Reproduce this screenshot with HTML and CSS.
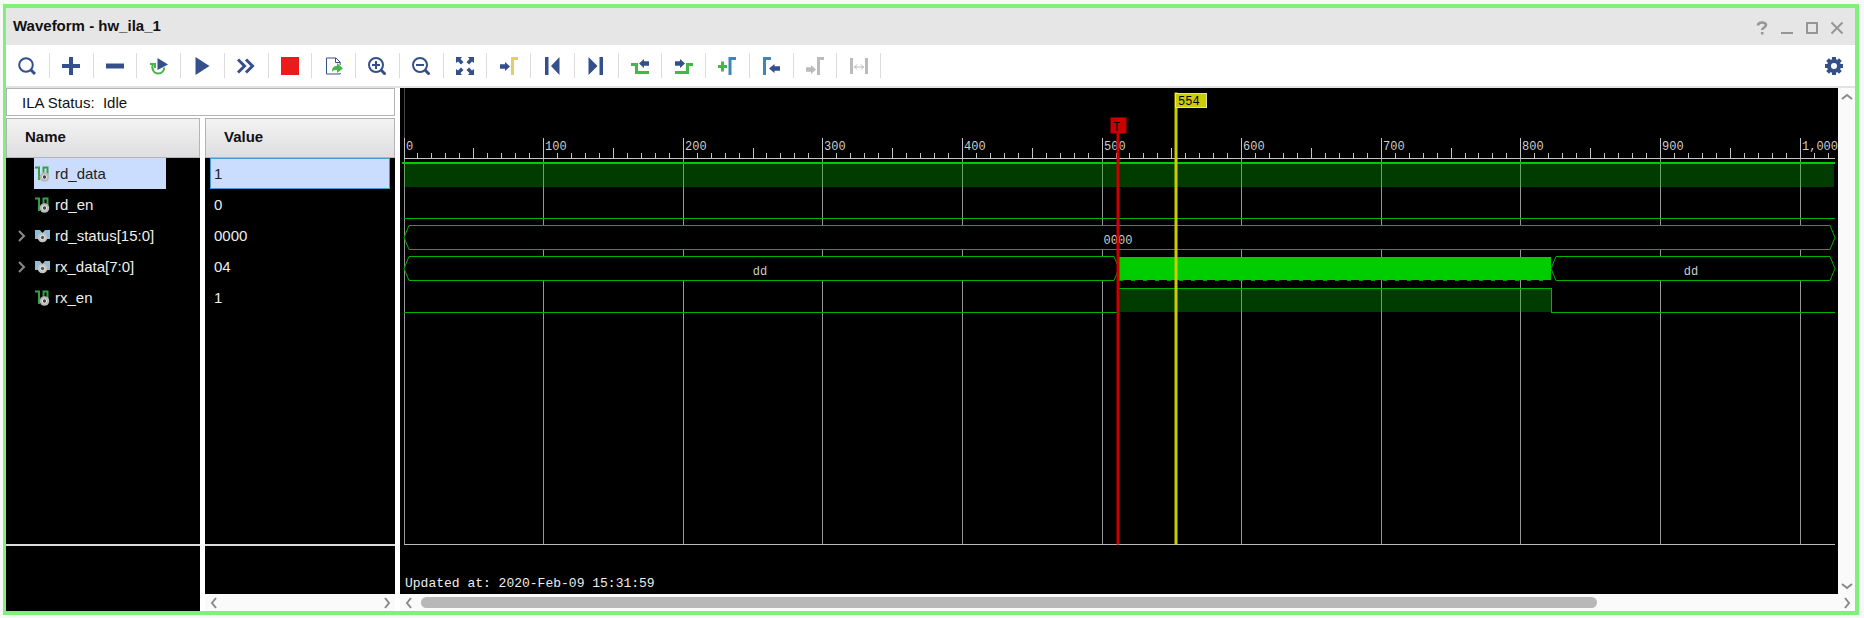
FILE: index.html
```html
<!DOCTYPE html>
<html lang="en">
<head>
<meta charset="utf-8">
<title>Waveform - hw_ila_1</title>
<link rel="stylesheet" href="styles.css">
</head>
<body>
<svg class="defs" aria-hidden="true">
  <symbol id="arrow-r" viewBox="0 0 10 10" preserveAspectRatio="none"><path d="M0 2.500h5V0l5 5-5 5V7.500H0z"/></symbol>
  <symbol id="bit" viewBox="0 0 15 16"><path d="M0 1.500h4V14M8.500 10V1.500h4V8" fill="none" stroke="#35a048" stroke-width="2"/><circle cx="9.500" cy="11" r="4.800" fill="#b9b9b9"/><circle cx="9.500" cy="11" r="2.200" fill="#444" stroke="#eee"/></symbol>
  <symbol id="bus" viewBox="0 0 15 16"><path d="M0 2h5l2.500 3L10 2h5v9h-3L9 12H6L3 11H0z" fill="#8fbdd4"/><circle cx="7.500" cy="9.500" r="4.800" fill="#c4c4c4"/><circle cx="7.500" cy="9.500" r="2.200" fill="#555" stroke="#eee"/></symbol>
</svg>
<main class="window">
  <header class="titlebar">
    <h1>Waveform - hw_ila_1</h1>
    <div class="window-buttons">
      <button aria-label="Help"><svg viewBox="0 0 14 14"><path d="M3 4.500C3 .5 11 .5 11 4c0 2.500-3.800 2.500-3.800 5M7.200 11v2.500" stroke-width="2.600"/></svg></button>
      <button aria-label="Minimize"><svg viewBox="0 0 14 14"><path d="M1 12h12"/></svg></button>
      <button aria-label="Maximize"><svg viewBox="0 0 14 14"><path d="M2 2h10v10H2z"/></svg></button>
      <button aria-label="Close"><svg viewBox="0 0 14 14"><path d="M1.500 1.500l11 11M12.500 1.500l-11 11"/></svg></button>
    </div>
  </header>
  <nav class="toolbar" aria-label="Waveform tools">
    <div class="tools">
      <button aria-label="Search"><svg viewBox="0 0 18 18"><circle cx="8" cy="8" r="6.800" class="s"/><path d="M13 13l4 4" class="s w3"/></svg></button>
      <button aria-label="Add"><svg viewBox="0 0 18 18"><path d="M9 0v18M0 9h18" class="s w4"/></svg></button>
      <button aria-label="Remove"><svg viewBox="0 0 18 18"><path d="M0 9h18" class="s w5"/></svg></button>
      <button aria-label="Run trigger"><svg viewBox="0 0 18 18"><path d="M3 7c-2 5 1 9.500 5 9.500 4 0 6.500-3 6-6M0 7h5v4" class="s green"/><path d="M7.500 1l10.500 6.500L7.500 13z"/></svg></button>
      <button aria-label="Run"><svg viewBox="0 0 18 18"><path d="M2.500 0l14 9-14 9z"/></svg></button>
      <button aria-label="Run immediately"><svg viewBox="0 0 18 18"><path d="M1 2.500l6.500 6.500L1 15.500M9 2.500l6.500 6.500L9 15.500" class="s w3"/></svg></button>
      <button aria-label="Stop"><svg viewBox="0 0 18 18"><path d="M0 0h18v18H0z" fill="#ec1b1b"/></svg></button>
      <button aria-label="Export"><svg viewBox="0 0 18 18"><path d="M15.200 8V5.200L11 1H1.500v16h13.700v-1M10.500 1v4.500H15" class="s w1"/><path d="M7 15c0-5 2-6 5-6V6l6 5.500-6 4.500v-3c-2 0-4 0-5 2z" fill="#47b549"/></svg></button>
      <button aria-label="Zoom in"><svg viewBox="0 0 18 18"><circle cx="8" cy="8" r="7" class="s"/><path d="M13 13l4.500 4.500" class="s w3"/><path d="M8 4v8M4 8h8" class="s"/></svg></button>
      <button aria-label="Zoom out"><svg viewBox="0 0 18 18"><circle cx="8" cy="8" r="7" class="s"/><path d="M13 13l4.500 4.500" class="s w3"/><path d="M4 8h8" class="s"/></svg></button>
      <button aria-label="Zoom fit"><svg viewBox="0 0 18 18"><path d="M0 0h6L4.500 2 7.500 5 5 7.500 2 4.500 0 6zM18 0v6l-2-1.500L13 7.500 10.500 5l3-3L12 0zM0 18v-6l2 1.500L5 10.500 7.500 13l-3 3L6 18zM18 18h-6l1.500-2-3-3 2.500-2.500 3 3L18 12z"/></svg></button>
      <button aria-label="Go to cursor"><svg viewBox="0 0 18 18"><use href="#arrow-r" x="0" y="5" width="10" height="9"/><path d="M12.500 18V1.500H18" class="s w3 gold"/></svg></button>
      <button aria-label="Go to start"><svg viewBox="0 0 18 18"><path d="M2 0h3.500v18H2zM16.500 0v18L8 9z"/></svg></button>
      <button aria-label="Go to end"><svg viewBox="0 0 18 18"><path d="M12.500 0H16v18h-3.500zM1.500 0v18L10.500 9z"/></svg></button>
      <button aria-label="Previous transition"><svg viewBox="0 0 18 18"><path d="M0 7.500h5.500v8H18" class="s w3 green"/><use href="#arrow-r" x="8" y="2" width="10" height="9" transform="rotate(180 13 6.500)"/></svg></button>
      <button aria-label="Next transition"><svg viewBox="0 0 18 18"><path d="M0 15.500h12.500v-8H18" class="s w3 green"/><use href="#arrow-r" x="0" y="2" width="10" height="9"/></svg></button>
      <button aria-label="Add marker"><svg viewBox="0 0 18 18"><path d="M4.500 4.500v10M0 9.500h9" class="s w3 green"/><path d="M12 18V1.500h6" class="s w3 blue"/></svg></button>
      <button aria-label="Previous marker"><svg viewBox="0 0 18 18"><path d="M2.500 18V1.500H9" class="s w3 blue"/><use href="#arrow-r" x="7" y="7" width="11" height="9" transform="rotate(180 12.500 11.500)"/></svg></button>
      <button aria-label="Next marker" disabled><svg viewBox="0 0 18 18"><use href="#arrow-r" x="0" y="8" width="10" height="9"/><path d="M12.500 18V1.500H18" class="s w3"/></svg></button>
      <button aria-label="Swap cursors" disabled><svg viewBox="0 0 18 18"><path d="M1.500 1v16M16.500 1v16" class="s w3"/><path d="M4 10h10M7 7.500L4.500 10 7 12.500M11 7.500l2.500 2.500-2.500 2.500" class="s w1"/></svg></button>
    </div>
    <button class="settings" aria-label="Settings"><svg viewBox="0 0 18 18"><circle cx="9" cy="9" r="5" class="s w4"/><path d="M9 0v4M9 14v4M0 9h4M14 9h4M2.600 2.600l2.500 2.500M12.900 12.900l2.500 2.500M2.600 15.400l2.500-2.500M12.900 5.100l2.500-2.500" class="s w4"/></svg></button>
  </nav>
  <div class="content">
    <section class="signals">
      <p class="status">ILA Status:&nbsp; Idle</p>
      <div class="columns">
        <div class="pane">
          <table>
            <thead><tr><th>Name</th></tr></thead>
            <tbody>
              <tr><td><div class="name"><span class="twisty"></span><span class="label selected"><svg><use href="#bit"/></svg>rd_data</span></div></td></tr>
              <tr><td><div class="name"><span class="twisty"></span><span class="label"><svg><use href="#bit"/></svg>rd_en</span></div></td></tr>
              <tr><td><div class="name"><button class="twisty" aria-label="Expand rd_status"><svg viewBox="0 0 8 12"><path d="M1 1l5 5-5 5"/></svg></button><span class="label"><svg><use href="#bus"/></svg>rd_status[15:0]</span></div></td></tr>
              <tr><td><div class="name"><button class="twisty" aria-label="Expand rx_data"><svg viewBox="0 0 8 12"><path d="M1 1l5 5-5 5"/></svg></button><span class="label"><svg><use href="#bus"/></svg>rx_data[7:0]</span></div></td></tr>
              <tr><td><div class="name"><span class="twisty"></span><span class="label"><svg><use href="#bit"/></svg>rx_en</span></div></td></tr>
            </tbody>
          </table>
          <div class="rest"></div>
          <div class="foot tall"></div>
        </div>
        <div class="pane">
          <table>
            <thead><tr><th>Value</th></tr></thead>
            <tbody>
              <tr><td><div class="value selected">1</div></td></tr>
              <tr><td><div class="value">0</div></td></tr>
              <tr><td><div class="value">0000</div></td></tr>
              <tr><td><div class="value">04</div></td></tr>
              <tr><td><div class="value">1</div></td></tr>
            </tbody>
          </table>
          <div class="rest"></div>
          <div class="foot"></div>
          <div class="scroll-x">
            <button aria-label="Scroll left"><svg viewBox="0 0 8 12"><path d="M6 1L2 6l4 5"/></svg></button>
            <div class="track"></div>
            <button aria-label="Scroll right"><svg viewBox="0 0 8 12"><path d="M2 1l4 5-4 5"/></svg></button>
          </div>
        </div>
      </div>
    </section>
    <section class="wave">
      <div class="wave-main">
        <div class="canvas">
          <div class="plot"><svg id="plot" role="img" aria-label="Signal waveforms"></svg></div>
          <p class="updated">Updated at: 2020-Feb-09 15:31:59</p>
        </div>
        <div class="scroll-y">
          <button aria-label="Scroll up"><svg viewBox="0 0 12 8"><path d="M1 6l5-4 5 4"/></svg></button>
          <button aria-label="Scroll down"><svg viewBox="0 0 12 8"><path d="M1 2l5 4 5-4"/></svg></button>
        </div>
      </div>
      <div class="scroll-x">
        <button aria-label="Scroll left"><svg viewBox="0 0 8 12"><path d="M6 1L2 6l4 5"/></svg></button>
        <div class="track"><div class="thumb"></div></div>
        <button aria-label="Scroll right"><svg viewBox="0 0 8 12"><path d="M2 1l4 5-4 5"/></svg></button>
      </div>
    </section>
  </div>
</main>
<script src="plot.js"></script>
</body>
</html>
```
FILE: plot.js
```js
const svg = document.getElementById('plot');
const SAMPLES = 1025;

function add(tag, cls, attrs, text) {
  const el = document.createElementNS('http://www.w3.org/2000/svg', tag);
  el.setAttribute('class', cls);
  for (const k in attrs) el.setAttribute(k, attrs[k]);
  if (text) el.textContent = text;
  svg.appendChild(el);
}

function draw() {
  const width = svg.clientWidth;
  const height = svg.clientHeight;
  const X = s => Math.floor(s * width / SAMPLES);
  const rect = (cls, x, y, w, h) => add('rect', cls, { x, y, width: w, height: h });
  svg.replaceChildren();

  // ruler and grid
  rect('edge', 0, 0, 1, 50);
  for (let s = 0; s <= 1020; s += 10) {
    const top = s % 100 === 0 ? 50 : s % 50 === 0 ? 60 : 65;
    rect('tick', X(s), top, 1, 70 - top);
    if (s % 100 === 0) {
      rect('grid', X(s), 70, 1, height - 70);
      add('text', 'num', { x: X(s) + 2, y: 62 }, s.toLocaleString('en-US'));
    }
  }
  rect('tick', 0, 70, width, 1);

  // bit signals
  rect('fill', 0, 76, width - 1, 23);
  rect('bright', -2, 74, width + 2, 2);
  rect('line', 0, 130, width, 1);
  const rise = X(512) + 1, fall = X(822);
  rect('line', 0, 224, rise, 1);
  rect('fill', rise, 200, fall - rise, 24);
  rect('line', rise, 200, fall - rise, 1);
  rect('line', fall, 200, 1, 25);
  rect('line', fall, 224, width - fall, 1);

  // buses
  const bus = (a, b, y, label) => {
    const m = y + 12, e = y + 24;
    add('path', 'bus', { d: `M${a} ${m}L${a + 5} ${y}H${b - 5}L${b} ${m}L${b - 5} ${e}H${a + 5}Z` });
    add('text', 'num mid', { x: Math.round((a + b) / 2) - 2, y: y + 18 }, label);
  };
  bus(0, width, 137.5, '0000');
  bus(0, rise, 168.5, 'dd');
  bus(fall, width, 168.5, 'dd');
  rect('busy', rise, 169, fall - rise, 23);
  add('line', 'busy-edge', { x1: rise, x2: fall, y1: 192.5, y2: 192.5 });

  // trigger and cursor markers
  const t = X(512), c = X(553);
  rect('trigger', t - 1, 45, 2, height - 45);
  rect('trigger', t - 7, 30, 15, 15);
  add('text', 'num flag', { x: t - 5, y: 43 }, 'T');
  rect('cursor', c - 1, 5, 2, height - 5);
  add('rect', 'cursor flagbox', { x: c - 0.5, y: 5.5, width: 31, height: 14 });
  add('text', 'num flag', { x: c + 2, y: 17 }, '554');
}

draw();
window.addEventListener('resize', draw);
```
FILE: styles.css
```css
* { box-sizing: border-box; }
body {
  margin: 0;
  background: #f8f8f8;
  color: #111;
  font: 15px/20px "Liberation Sans", Arial, sans-serif;
}
button { border: 0; padding: 0; background: none; display: flex; align-items: center; justify-content: center; }
h1, p { margin: 0; }
.defs { display: none; }
.window {
  display: flex;
  flex-direction: column;
  min-height: calc(100vh - 7px);
  margin: 4px 5px 3px 3px;
  border: 4px solid #80ef7b;
  border-left-width: 3px;
  background: #fff;
}
.titlebar {
  display: flex;
  align-items: center;
  justify-content: space-between;
  height: 37px;
  padding: 0 6px 2px 7px;
  background: #e6e6e6;
}
.titlebar h1 { font-size: 15px; line-height: 20px; }
.window-buttons { display: flex; gap: 1px; padding-top: 4px; }
.window-buttons button { width: 24px; height: 20px; }
.window-buttons svg { width: 14px; height: 14px; fill: none; stroke: #969696; stroke-width: 2; }
.toolbar {
  display: flex;
  justify-content: space-between;
  align-items: center;
  height: 43px;
  padding-right: 12px;
  border-bottom: 2px solid #e2e2e2;
}
.tools { display: grid; grid-template-columns: repeat(20, 1fr); width: 875px; }
.tools button { height: 25px; border-right: 1px solid #dcdcdc; }
.toolbar svg { width: 18px; height: 18px; fill: #34508a; stroke: none; color: #34508a; }
.toolbar .s { fill: none; stroke: #34508a; stroke-width: 2; }
.toolbar .w1 { stroke-width: 1; }
.toolbar .w3 { stroke-width: 3; }
.toolbar .w4 { stroke-width: 4; }
.toolbar .w5 { stroke-width: 5; }
.toolbar .green { stroke: #47b549; }
.toolbar .gold { stroke: #e5cc6c; }
.toolbar .blue { stroke: #3d86bd; }
.toolbar button:disabled svg { fill: #bbb; }
.toolbar button:disabled .s { stroke: #bbb; }
.content { flex: 1; display: flex; gap: 5px; }
.signals { display: flex; flex-direction: column; width: 389px; }
.status {
  height: 28px;
  margin-bottom: 2px;
  padding: 4px 15px 2px;
  border: 1px solid #b4b4b4;
}
.columns { flex: 1; display: grid; grid-template-columns: 194px 190px; gap: 5px; }
.pane { display: flex; flex-direction: column; background: #000; color: #eee; }
table { width: 100%; border-collapse: separate; border-spacing: 0; }
th {
  height: 40px;
  padding: 0 18px 2px;
  border: 1px solid #b4b4b4;
  background: linear-gradient(#f3f3f3, #dedee0);
  color: #111;
  text-align: left;
}
td { height: 31px; padding: 0; }
.name { display: flex; align-items: center; height: 31px; padding-left: 8px; }
.twisty { width: 20px; height: 20px; padding-right: 4px; }
.twisty svg, .scroll-x svg, .scroll-y svg { fill: none; stroke: #8a8a8a; stroke-width: 2; }
.twisty svg { width: 8px; height: 12px; }
.label { display: flex; align-items: center; gap: 5px; width: 132px; height: 31px; padding-left: 1px; white-space: nowrap; }
.label svg { width: 15px; height: 16px; }
.value { height: 31px; margin: 0 5px; padding: 0 3px; border: 1px solid transparent; line-height: 29px; }
.selected { background: #cbddff; color: #222; }
.value.selected { border-color: #4599d4; }
.rest { flex: 1; }
.foot { height: 50px; border-top: 2px solid #ddd; }
.foot.tall { height: 67px; }
.wave { flex: 1; min-width: 0; display: flex; flex-direction: column; }
.wave-main { flex: 1; display: flex; }
.canvas { flex: 1; min-width: 0; display: flex; flex-direction: column; overflow: hidden; padding: 0 3px 0 4px; background: #000; }
.plot { flex: 1; display: flex; min-height: 320px; border-bottom: 1px solid #bbb; }
.plot svg { flex: 1; min-width: 0; overflow: visible; }
.updated { height: 49px; padding: 29px 1px 0; color: #eee; font: 13px/20px "Liberation Mono", monospace; }
.scroll-x { display: flex; align-items: center; height: 17px; background: #fafafa; }
.scroll-x button { width: 17px; height: 17px; }
.scroll-x svg { width: 8px; height: 12px; }
.track { flex: 1; height: 11px; padding-left: 4px; }
.thumb { width: 83%; height: 11px; border-radius: 6px; background: #b8b8b8; }
.scroll-y { display: flex; flex-direction: column; justify-content: space-between; width: 17px; background: #fafafa; }
.scroll-y button { width: 17px; height: 17px; }
.scroll-y svg { width: 12px; height: 8px; }
.tick { fill: #c4c4c4; }
.grid { fill: #959595; }
.edge { fill: #444; }
.num { fill: #ccc; font: 12px "Liberation Mono", monospace; }
.mid { text-anchor: middle; }
.flag { fill: #000; }
.fill { fill: #00c800; fill-opacity: 0.3; }
.bright, .busy { fill: #00cd00; }
.line { fill: #00b400; }
.bus { fill: #000; stroke: #00b400; stroke-width: 1; }
.busy-edge { stroke: #00a000; stroke-width: 1; stroke-dasharray: 4 8; }
.trigger { fill: #cc0000; stroke: #cc0000; stroke-width: 1; }
.cursor { fill: #cccc00; stroke: #cccc00; stroke-width: 1; }
.flagbox { stroke: #e0e0b0; }
```
